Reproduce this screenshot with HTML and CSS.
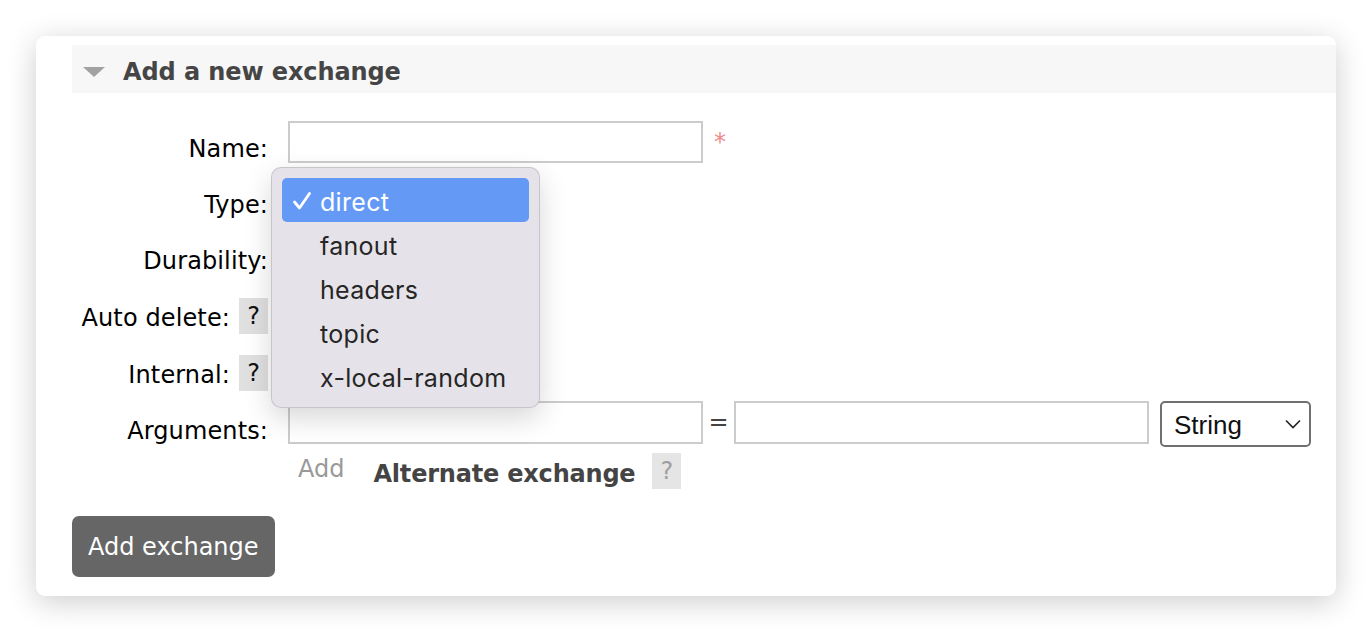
FILE: index.html
```html
<!DOCTYPE html>
<html lang="en">
<head>
<meta charset="utf-8">
<title>Add a new exchange</title>
<link rel="stylesheet" href="styles.css">
</head>
<body>
<div class="page">
  <div class="card">
    <div class="section-head">
      <span class="toggle"></span>
      <h2 class="section-title">Add a new exchange</h2>
    </div>

    <div class="form">
      <div class="row">
        <div class="label"><span class="label-text">Name:</span></div>
        <div class="field">
          <input class="text-input" type="text">
          <span class="required">*</span>
        </div>
      </div>
      <div class="row">
        <div class="label"><span class="label-text">Type:</span></div>
        <div class="field"></div>
      </div>
      <div class="row row-tall">
        <div class="label"><span class="label-text">Durability:</span></div>
        <div class="field"></div>
      </div>
      <div class="row row-tall">
        <div class="label"><span class="label-text">Auto delete:</span><span class="help">?</span></div>
        <div class="field"></div>
      </div>
      <div class="row row-short">
        <div class="label"><span class="label-text">Internal:</span><span class="help">?</span></div>
        <div class="field"></div>
      </div>
      <div class="row row-args">
        <div class="label"><span class="label-text label-args">Arguments:</span></div>
        <div class="field">
          <input class="text-input arg-input" type="text">
          <span class="equals">=</span>
          <input class="text-input arg-input" type="text">
          <div class="select">
            <span class="select-value">String</span>
            <svg class="chevron" width="16" height="10" viewBox="0 0 16 10"><path d="M1 1.5 L8 8.5 L15 1.5" fill="none" stroke="#222" stroke-width="1.6"/></svg>
          </div>
        </div>
      </div>
      <div class="row row-sub">
        <div class="label"></div>
        <div class="field">
          <span class="add-link">Add</span>
          <span class="alt-label">Alternate exchange</span>
          <span class="help help-muted">?</span>
        </div>
      </div>
    </div>

    <button class="submit" type="button">Add exchange</button>

    <div class="popup">
      <div class="option selected">
        <svg class="check" width="20" height="20" viewBox="0 0 20 20"><path d="M2.5 11 L7.5 17 L17.5 2.5" fill="none" stroke="#fff" stroke-width="2.8" stroke-linecap="round" stroke-linejoin="round"/></svg>direct
      </div>
      <div class="option">fanout</div>
      <div class="option">headers</div>
      <div class="option">topic</div>
      <div class="option">x-local-random</div>
    </div>
  </div>
</div>
</body>
</html>
```

FILE: styles.css
```css
* { box-sizing: border-box; }

body {
  margin: 0;
  background: #ffffff;
  font-family: "DejaVu Sans", Verdana, sans-serif;
  font-size: 24px;
  color: #000;
}

.page {
  padding: 36px;
  width: 1372px;
  height: 632px;
}

.card {
  position: relative;
  width: 1300px;
  height: 560px;
  background: #fff;
  border-radius: 9px;
  box-shadow: 0 6px 30px rgba(0, 0, 0, 0.2);
  padding: 9px 0 0 36px;
}

.section-head {
  height: 48px;
  background: #f7f7f7;
  display: flex;
  align-items: center;
  padding: 5px 0 0 11px;
}

.toggle {
  width: 0;
  height: 0;
  border-left: 11px solid transparent;
  border-right: 11px solid transparent;
  border-top: 10px solid #a2a2a2;
  margin-right: 18px;
}

.section-title {
  margin: 0;
  font-size: 24px;
  line-height: 28px;
  font-weight: bold;
  color: #454545;
  letter-spacing: -0.1px;
}

.form {
  margin-top: 28px;
}

.row {
  display: flex;
  height: 56px;
}
.row-tall { height: 57px; }
.row-short { height: 54px; }
.row-args { height: 52px; }
.row-sub { height: 36px; }

.label {
  width: 196px;
  flex: none;
  display: flex;
  justify-content: flex-end;
  align-items: flex-start;
}

.label-text {
  margin-top: 14px;
  line-height: 28px;
  white-space: nowrap;
  letter-spacing: 0.12px;
}
.label-args { margin-top: 16px; }

.help {
  width: 29px;
  height: 36px;
  margin: 8px 0 0 9px;
  background: #e0e0e0;
  color: #111;
  display: flex;
  align-items: center;
  justify-content: center;
  line-height: 1;
}

.field {
  margin-left: 20px;
  display: flex;
  align-items: flex-start;
}

.text-input {
  width: 415px;
  height: 42px;
  border: 2px solid #cccccc;
  border-radius: 0;
  background: #fff;
  margin: 0;
  padding: 0 6px;
  font: inherit;
  outline: none;
}
.arg-input { height: 43px; }

.required {
  color: #f08a8a;
  margin: 9px 0 0 11px;
  line-height: 24px;
}

.equals {
  width: 31px;
  text-align: center;
  line-height: 43px;
  color: #444;
}

.select {
  width: 151px;
  height: 46px;
  margin-left: 11px;
  border: 2px solid #707070;
  border-radius: 5px;
  display: flex;
  align-items: center;
  justify-content: space-between;
  padding: 0 8px 0 12px;
  font-family: "Liberation Sans", Arial, sans-serif;
  font-size: 26px;
  color: #111;
}
.select-value { line-height: 30px; padding-top: 2px; }

.add-link {
  color: #999;
  margin: 2px 0 0 10px;
  line-height: 28px;
}

.alt-label {
  font-weight: bold;
  color: #444;
  margin: 7px 0 0 29px;
  line-height: 28px;
  letter-spacing: -0.2px;
}

.help-muted {
  margin: 0 0 0 17px;
  background: #e5e5e5;
  color: #a0a0a0;
}

.submit {
  display: block;
  margin-top: 27px;
  height: 61px;
  padding: 0 16px;
  border: 0;
  border-radius: 7px;
  background: #666666;
  color: #fff;
  font-family: "DejaVu Sans", Verdana, sans-serif;
  font-size: 24px;
}

.popup {
  position: absolute;
  left: 235px;
  top: 131px;
  width: 269px;
  height: 241px;
  padding: 10px;
  background: #e5e3e9;
  border: 1px solid rgba(0, 0, 0, 0.13);
  border-radius: 10px;
  box-shadow: 0 10px 28px rgba(0, 0, 0, 0.16);
  font-family: Inter, "Noto Sans", sans-serif;
  font-size: 25px;
  letter-spacing: 0.3px;
  color: #262626;
}

.option {
  position: relative;
  height: 44px;
  padding-top: 4px;
  line-height: 40px;
  padding-left: 38px;
  border-radius: 5px;
  white-space: nowrap;
}

.option.selected {
  background: #6499f5;
  color: #fff;
}

.check {
  position: absolute;
  left: 10px;
  top: 13px;
}
```
